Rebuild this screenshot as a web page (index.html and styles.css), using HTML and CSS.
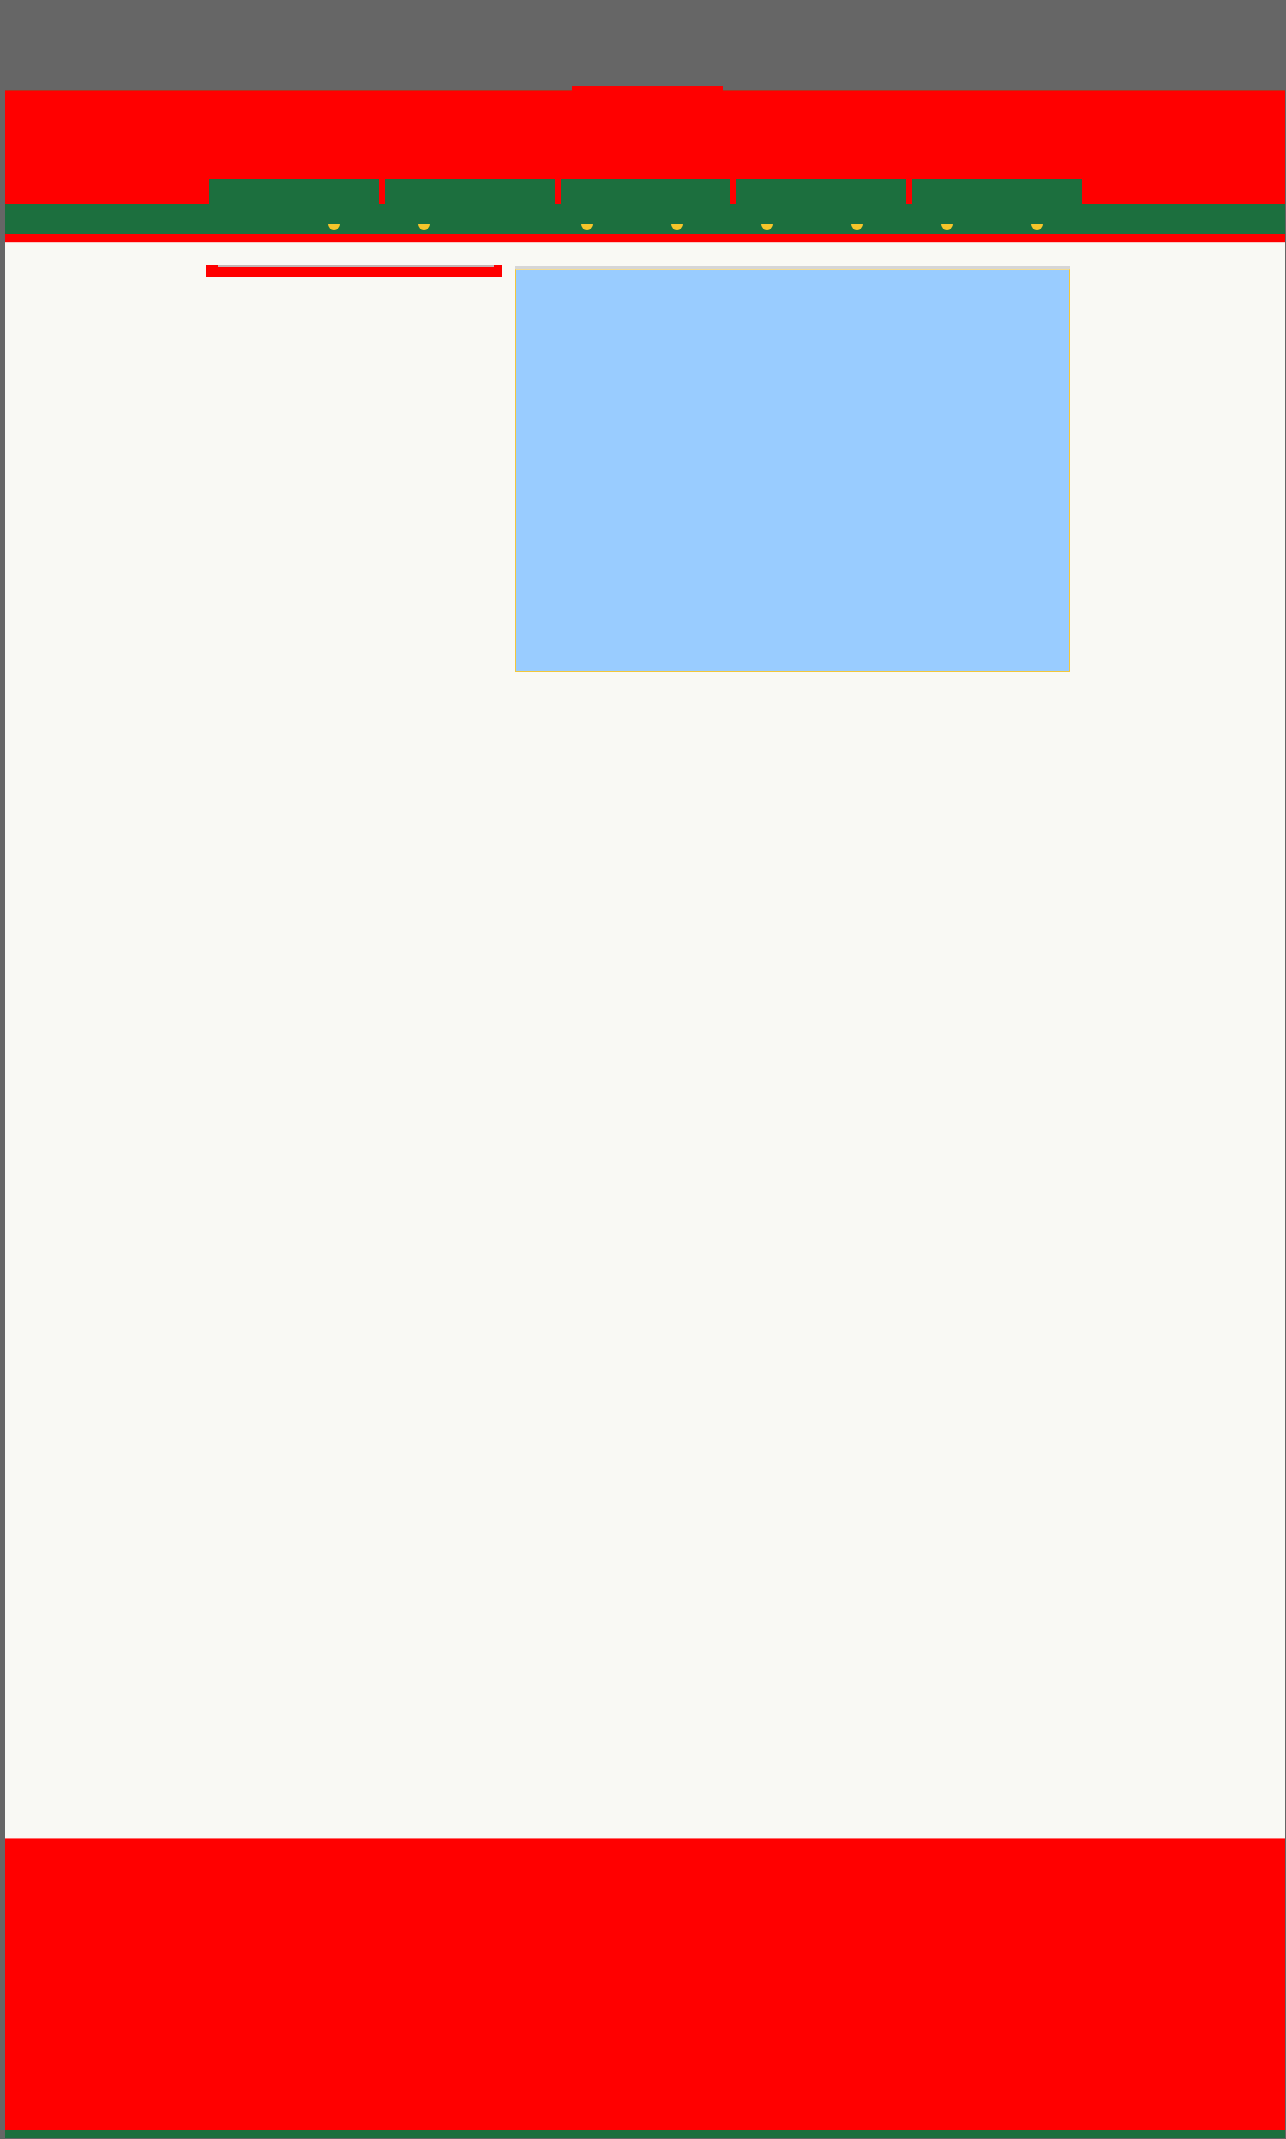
FILE: index.html
```html
<!DOCTYPE html>
<html lang="en">
<head>
<meta charset="utf-8">
<title>Page</title>
<link rel="stylesheet" href="styles.css">
</head>
<body>
  <div class="top-space"></div>
  <div class="page">
    <div class="bump-row"><div class="bump"></div></div>
    <header class="header">
      <nav class="tabs">
        <a class="tab" href="#"></a>
        <a class="tab" href="#"></a>
        <a class="tab tab--narrow" href="#"></a>
        <a class="tab" href="#"></a>
        <a class="tab" href="#"></a>
      </nav>
    </header>
    <div class="band">
      <span class="dot"></span>
      <span class="dot"></span>
      <span class="dot dot--wide"></span>
      <span class="dot"></span>
      <span class="dot"></span>
      <span class="dot"></span>
      <span class="dot"></span>
      <span class="dot"></span>
    </div>
    <div class="strip"></div>
    <main class="main">
      <aside class="sidebar">
        <div class="side-bar"><div class="side-line"></div></div>
      </aside>
      <section class="content">
        <div class="panel-wrap">
          <div class="panel"></div>
        </div>
      </section>
    </main>
    <footer class="footer"></footer>
    <div class="footer-base"></div>
  </div>
</body>
</html>
```

FILE: styles.css
```css
html, body {
  margin: 0;
  padding: 0;
}
body {
  background: #666666;
  font-family: "Liberation Sans", Arial, sans-serif;
  width: 1286px;
  min-height: 2139px;
}
.top-space {
  height: 86px;
}
.page {
  margin-left: 5px;
  width: 1280px;
  display: flex;
  flex-direction: column;
}
.bump-row {
  height: 4px;
  display: flex;
  position: relative;
  z-index: 1;
}
.bump {
  margin-left: 567px;
  width: 151px;
  height: 5px;
  background: #ff0000;
}
.header {
  background: #ff0000;
  border-top: 1px solid #b3331f;
  height: 113px;
  box-sizing: content-box;
  display: flex;
  flex-direction: column;
  justify-content: flex-end;
}
.tabs {
  display: flex;
  gap: 6px;
  padding-left: 204px;
  height: 25px;
}
.tab {
  display: block;
  width: 170px;
  height: 25px;
  background: #1c6f3e;
}
.tab--narrow {
  width: 169px;
}
.band {
  height: 30px;
  background: #1c6f3e;
  display: flex;
  align-items: flex-start;
  gap: 78px;
  padding-left: 323px;
  box-sizing: border-box;
}
.dot {
  display: block;
  width: 12px;
  height: 6px;
  margin-top: 20px;
  background: #f6c52a;
  border-radius: 0 0 6px 6px;
}
.dot--wide {
  margin-left: 73px;
}
.strip {
  height: 8px;
  background: #ff0000;
}
.main {
  background: #f9f9f4;
  height: 1596px;
  box-sizing: border-box;
  padding: 22px 0 0 201px;
  display: flex;
  align-items: flex-start;
  gap: 13px;
  border-top: 1px solid #fbc8c4;
}
.sidebar {
  width: 296px;
}
.side-bar {
  height: 12px;
  background: #ff0000;
  padding: 0 8px 0 12px;
}
.side-line {
  height: 2px;
  background: #c4b4b4;
}
.content {
  width: 555px;
  padding-top: 1px;
}
.panel-wrap {
  border-top: 3px solid #d6d6d6;
}
.panel {
  height: 401px;
  background: #99ccff;
  border: 1px solid #f3c83a;
  border-top-color: #f4dc92;
}
.footer {
  height: 292px;
  background: #ff0000;
  border-top: 1px solid #ff6a6a;
  box-sizing: border-box;
}
.footer-base {
  height: 8px;
  background: #1c6f3e;
}
```
